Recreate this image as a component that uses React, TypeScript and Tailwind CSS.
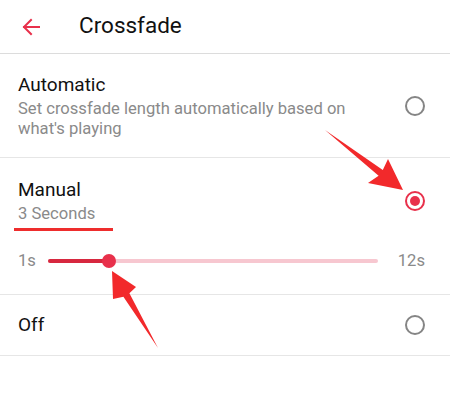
import React from "react";

const RED = "#e8304b";

function Radio({ checked }: { checked?: boolean }) {
  if (checked) {
    return (
      <div className="w-[20px] h-[20px] rounded-full border-[2px] border-[#e8304b] flex items-center justify-center">
        <div className="w-[10px] h-[10px] rounded-full bg-[#e8304b]" />
      </div>
    );
  }
  return <div className="w-[20px] h-[20px] rounded-full border-[2px] border-[#858585]" />;
}

export default function App() {
  return (
    <div
      className="relative w-[450px] h-[409px] bg-white overflow-hidden"
      style={{ fontFamily: "Roboto, 'Noto Sans', sans-serif" }}
    >
      {/* Header */}
      <div className="h-[54px] flex items-center border-b border-[#dcdcdc]">
        <div className="w-[79px] pl-[21px] flex items-center">
          <svg width="20" height="20" viewBox="0 0 20 20" fill="none">
            <path d="M18 10H3M10 3L3 10L10 17" stroke={RED} strokeWidth="2" strokeLinecap="square" />
          </svg>
        </div>
        <div className="text-[22.5px] text-[#111] leading-none -mt-[2px]">Crossfade</div>
      </div>

      {/* Automatic */}
      <div className="flex items-center border-b border-[#e6e6e6] pl-[18px] pr-[25px] pt-[19px] pb-[18px]">
        <div className="flex-1">
          <div className="text-[19px] leading-[24px] text-[#111]">Automatic</div>
          <div className="text-[16.6px] leading-[20px] text-[#8a8a8a] mt-[2px]">
            Set crossfade length automatically based on
            <br />
            what's playing
          </div>
        </div>
        <Radio />
      </div>

      {/* Manual */}
      <div className="relative border-b border-[#e6e6e6] pl-[18px] pr-[25px] pt-[20px] pb-[15px]">
        <div className="flex items-center">
          <div className="flex-1">
            <div className="text-[19px] leading-[24px] text-[#111]">Manual</div>
            <div className="text-[16.6px] leading-[20px] text-[#8a8a8a] mt-[2px]">3 Seconds</div>
          </div>
          <Radio checked />
        </div>
        <div className="absolute left-[14px] top-[70px] w-[99px] h-[3px] bg-[#ee2d2d]" />
        <div className="flex items-center mt-[19px] h-[36px]">
          <div className="w-[30px] text-[16.6px] text-[#8a8a8a]">1s</div>
          <div className="relative w-[330px] h-[4px] bg-[#f7c7d0] rounded-full">
            <div className="absolute left-0 top-0 h-[4px] w-[60px] bg-[#d7283f] rounded-full" />
            <div className="absolute left-[54px] top-[-5px] w-[14px] h-[14px] rounded-full bg-[#e8304b]" />
          </div>
          <div className="ml-auto text-[16.6px] text-[#8a8a8a]">12s</div>
        </div>
      </div>

      {/* Off */}
      <div className="h-[61px] flex items-center border-b border-[#e6e6e6] pl-[18px] pr-[25px]">
        <div className="flex-1 text-[19px] text-[#111]">Off</div>
        <Radio />
      </div>

      {/* annotation arrows */}
      <svg className="absolute left-0 top-0 pointer-events-none" width="450" height="409" viewBox="0 0 450 409">
        <polygon
          points="325,130 382.8,170.1 388,159 403,190 368,183 378.6,175.7"
          fill="#f2292b"
        />
        <polygon
          points="158,348 123.4,296.8 113,299 112,271 136,287 129.4,293.2"
          fill="#f2292b"
        />
      </svg>
    </div>
  );
}
